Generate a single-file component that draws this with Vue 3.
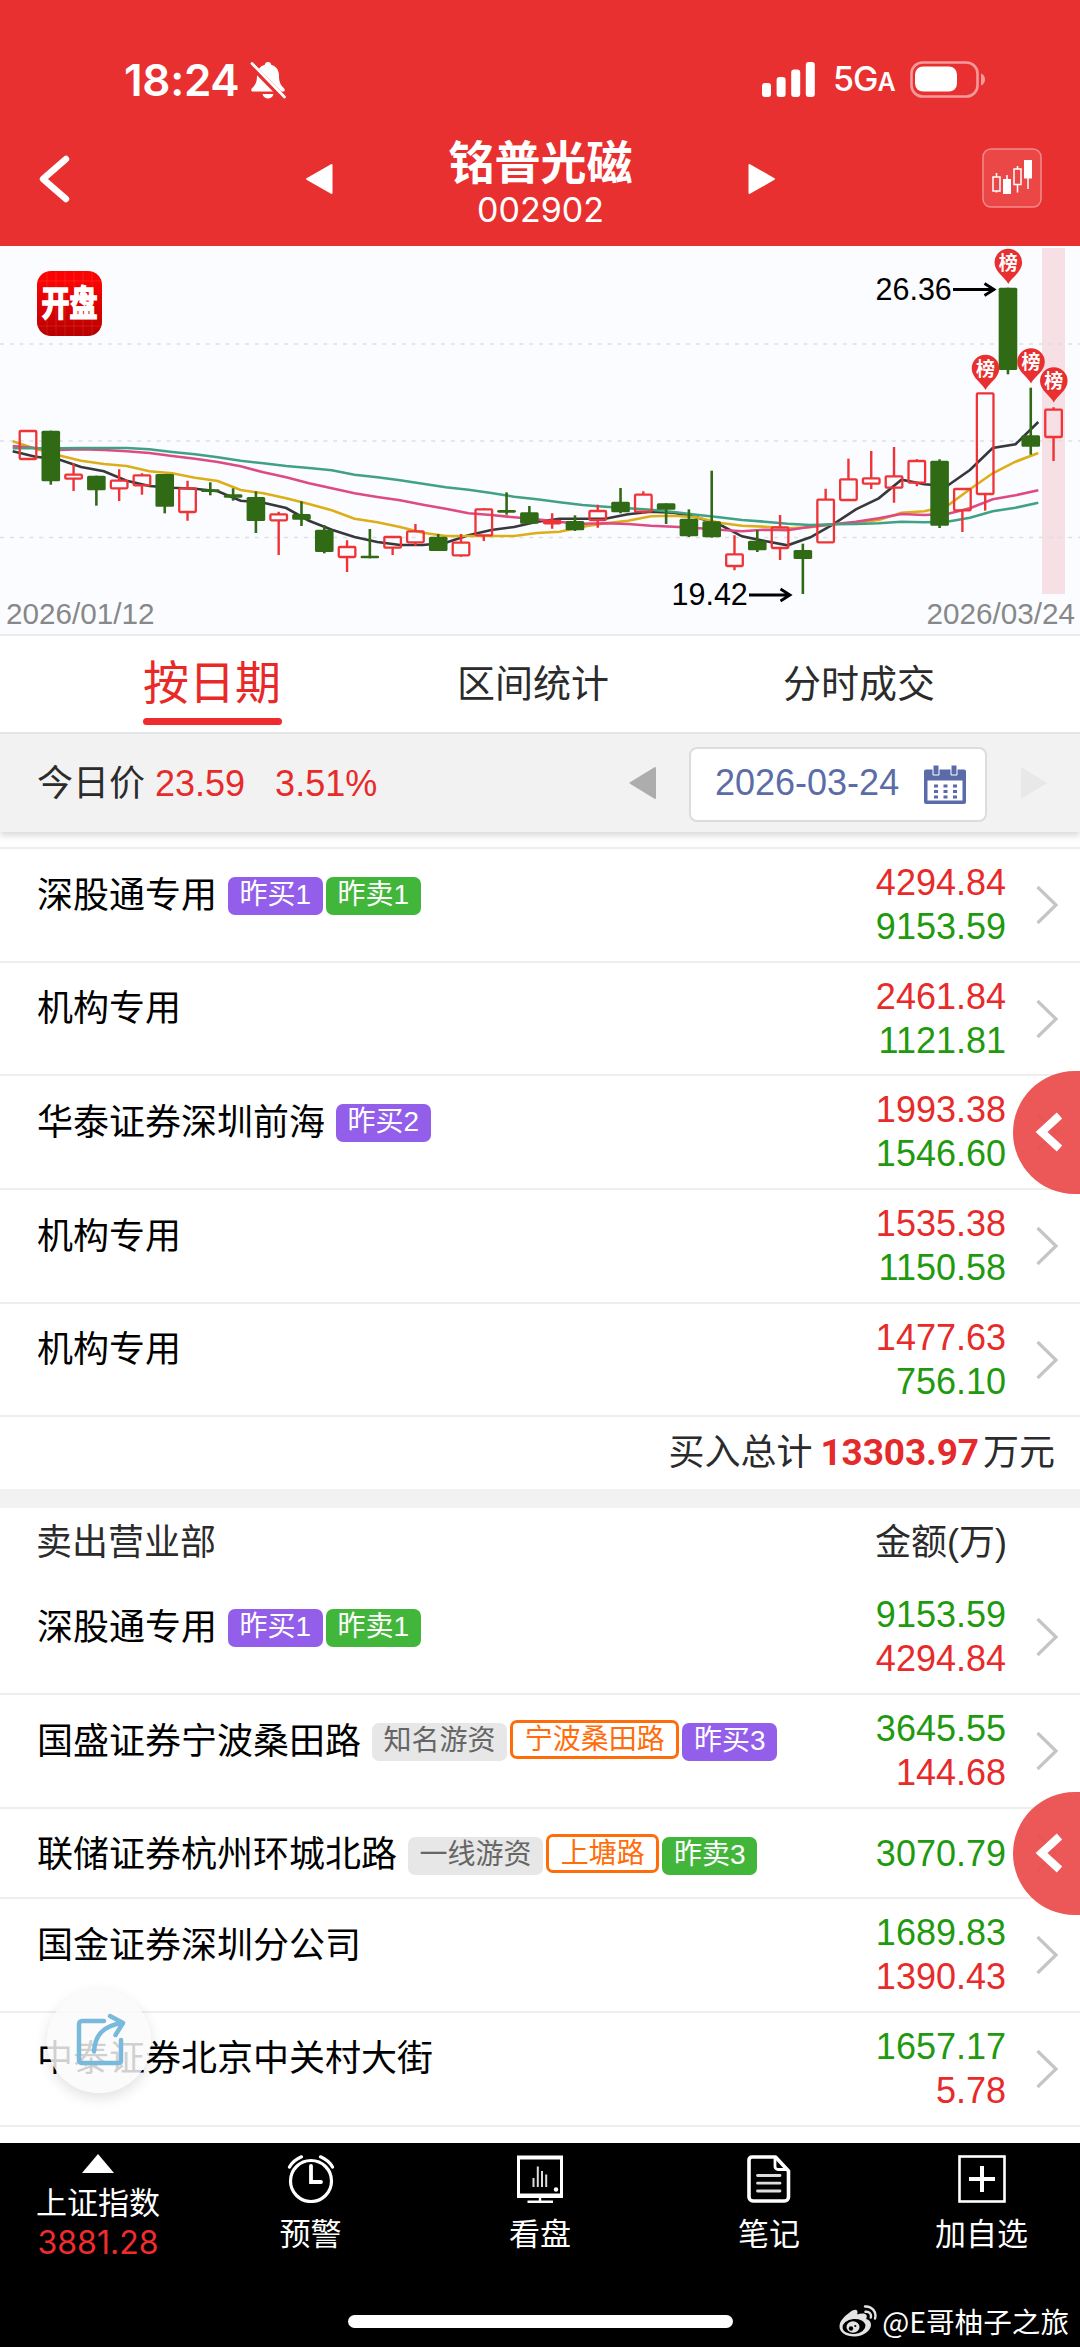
<script setup>
const STEP = 22.79
const yPos = (v) => v / 3 - 6

// direction, high, body top, body bottom, low
const rawCandles = [
  ['r', 573, 573, 657, 657], ['g', 572, 572, 724, 734], ['r', 669, 704, 716, 753], ['g', 707, 707, 751, 797],
  ['r', 688, 722, 745, 783], ['r', 700, 706, 736, 764], ['g', 702, 702, 800, 820], ['r', 722, 745, 816, 842],
  ['g', 727, 748, 756, 766], ['g', 745, 763, 773, 782], ['g', 754, 771, 843, 879], ['r', 815, 823, 841, 945],
  ['g', 784, 822, 839, 858], ['g', 855, 869, 936, 940], ['r', 901, 921, 951, 996], ['g', 867, 947, 955, 955],
  ['r', 891, 891, 923, 945], ['r', 852, 874, 907, 917], ['g', 882, 890, 933, 933], ['r', 882, 908, 946, 950],
  ['r', 805, 808, 886, 903], ['g', 757, 810, 818, 824], ['g', 798, 817, 851, 851], ['r', 820, 843, 850, 866],
  ['g', 826, 843, 871, 873], ['r', 794, 813, 840, 863], ['g', 744, 785, 817, 820], ['r', 754, 764, 815, 822],
  ['g', 790, 790, 809, 852], ['g', 808, 836, 889, 891], ['g', 692, 844, 892, 893], ['r', 886, 943, 978, 991],
  ['g', 870, 902, 931, 936], ['r', 825, 862, 924, 960], ['g', 911, 930, 957, 1062], ['r', 746, 779, 907, 909],
  ['r', 656, 718, 780, 780], ['r', 633, 715, 731, 747], ['r', 621, 709, 743, 788], ['r', 658, 663, 728, 739],
  ['g', 658, 662, 857, 864], ['r', 747, 747, 811, 876], ['r', 460, 460, 762, 812], ['g', 143, 143, 390, 403],
  ['g', 443, 586, 620, 644], ['r', 502, 509, 591, 663],
]
const candles = rawCandles.map(([dir, high, top, bottom, low], i) => ({
  dir,
  x: 28 + i * STEP,
  high: yPos(high),
  top: yPos(top),
  bottom: yPos(bottom),
  low: yPos(low),
}))

const averages = [
  { color: '#38383c', values: [634, 650, 658, 681, 694, 722, 738, 743, 746, 754, 782, 788, 804, 842, 869, 891, 906, 915, 915, 908, 886, 870, 861, 845, 836, 836, 836, 823, 815, 818, 832, 853, 889, 903, 916, 892, 853, 808, 775, 719, 733, 738, 690, 624, 613, 546] },
  { color: '#dcae17', values: [604, 626, 646, 662, 672, 678, 694, 700, 713, 723, 750, 760, 775, 792, 811, 836, 847, 861, 878, 888, 888, 888, 888, 879, 875, 860, 850, 842, 829, 827, 832, 848, 857, 860, 865, 862, 853, 848, 840, 818, 814, 798, 748, 700, 665, 639] },
  { color: '#dd4a84', values: [618, 624, 630, 628, 630, 634, 639, 648, 656, 666, 679, 697, 712, 730, 745, 760, 771, 781, 794, 806, 820, 825, 832, 838, 846, 851, 850, 852, 857, 860, 864, 869, 874, 869, 871, 860, 853, 845, 835, 822, 825, 822, 805, 778, 766, 751] },
  { color: '#40a184', values: [625, 625, 625, 624, 624, 624, 628, 636, 643, 652, 662, 670, 678, 684, 691, 704, 712, 721, 731, 742, 749, 759, 770, 778, 787, 795, 800, 805, 809, 816, 824, 832, 840, 845, 851, 855, 853, 852, 850, 845, 847, 845, 833, 814, 803, 788] },
].map((a) => ({
  color: a.color,
  points: a.values.map((v, i) => `${(12.7 + i * STEP).toFixed(1)},${yPos(v).toFixed(1)}`).join(' '),
}))

const pins = [
  { x: 985.5, y: 122.5 },
  { x: 1008.3, y: 16.5 },
  { x: 1031, y: 116 },
  { x: 1053.8, y: 135 },
]

const buyers = [
  { name: '深股通专用', tags: [['buy', '昨买1'], ['sell', '昨卖1']], amounts: ['4294.84', '9153.59'] },
  { name: '机构专用', tags: [], amounts: ['2461.84', '1121.81'] },
  { name: '华泰证券深圳前海', tags: [['buy', '昨买2']], amounts: ['1993.38', '1546.60'], handle: true },
  { name: '机构专用', tags: [], amounts: ['1535.38', '1150.58'] },
  { name: '机构专用', tags: [], amounts: ['1477.63', '756.10'] },
]
const sellers = [
  { name: '深股通专用', tags: [['buy', '昨买1'], ['sell', '昨卖1']], amounts: ['9153.59', '4294.84'] },
  { name: '国盛证券宁波桑田路', tags: [['kind', '知名游资'], ['alias', '宁波桑田路'], ['buy', '昨买3']], amounts: ['3645.55', '144.68'] },
  { name: '联储证券杭州环城北路', tags: [['kind', '一线游资'], ['alias', '上塘路'], ['sell', '昨卖3']], amounts: ['3070.79'], handle: true },
  { name: '国金证券深圳分公司', tags: [], amounts: ['1689.83', '1390.43'] },
  { name: '中泰证券北京中关村大街', tags: [], amounts: ['1657.17', '5.78'], share: true },
]
const sections = [
  { side: 'buying', rows: buyers },
  { side: 'selling', rows: sellers },
]
</script>

<template>
  <div class="screen">
    <header class="top">
      <div class="status">
        <div class="status-left">
          <span class="time">18:24</span>
          <svg class="bell" width="36" height="38" viewBox="0 0 36 38">
            <path d="M18 1c-2 0-3 1.300-3.200 2.800C9.600 5.300 7 9.500 7 14.500c0 7-1.500 9-5 12.700C.7 28.600 1.200 30.500 3 30.500h30c1.800 0 2.300-1.900 1-3.300-3.500-3.700-5-5.700-5-12.700 0-5-2.600-9.200-7.800-10.700C21 2.300 20 1 18 1z" fill="#fff" />
            <path d="M12.500 33h11c-.7 2.800-2.800 4.500-5.500 4.500S13.200 35.800 12.500 33z" fill="#fff" />
            <path d="M.5 3.500 33.500 37" stroke="#e93030" stroke-width="6" />
            <path d="M2 2.500 34.500 36" stroke="#fff" stroke-width="2.800" stroke-linecap="round" />
          </svg>
        </div>
        <div class="status-right">
          <svg width="53" height="35" viewBox="0 0 53 35" fill="#fff">
            <rect x="0" y="21" width="9" height="14" rx="3" />
            <rect x="14.600" y="15" width="9" height="20" rx="3" />
            <rect x="29.200" y="7.500" width="9" height="27.500" rx="3" />
            <rect x="43.800" y="0" width="9" height="35" rx="3" />
          </svg>
          <span class="net">5G<small>A</small></span>
          <svg width="76" height="37" viewBox="0 0 76 37">
            <rect x="1.500" y="1.500" width="66" height="34" rx="11" fill="none" stroke="#f59a9a" stroke-width="2.600" />
            <rect x="5" y="5.500" width="42" height="25" rx="8" fill="#fff" />
            <path d="M71 12.500c2.600 1 4 3.200 4 6s-1.400 5-4 6z" fill="#f59a9a" />
          </svg>
        </div>
      </div>
      <nav class="navbar">
        <svg class="back" width="32" height="48" viewBox="0 0 32 48"><path d="M28 4 5 24 28 44" fill="none" stroke="#fff" stroke-width="6.400" stroke-linecap="round" stroke-linejoin="round" /></svg>
        <svg class="prev" width="28" height="32" viewBox="0 0 28 32"><path d="M26.500 2v28L2 16z" fill="#fff" stroke="#fff" stroke-width="2" stroke-linejoin="round" /></svg>
        <div class="title">
          <h1>铭普光磁</h1>
          <p>002902</p>
        </div>
        <svg class="next" width="28" height="32" viewBox="0 0 28 32"><path d="M1.500 2v28L26 16z" fill="#fff" stroke="#fff" stroke-width="2" stroke-linejoin="round" /></svg>
        <svg class="kline" width="60" height="60" viewBox="0 0 60 60">
          <rect x="1" y="1" width="58" height="58" rx="8" fill="#eb4747" stroke="#f28a8a" stroke-width="1.500" />
          <path d="M14.500 25v4M14.500 43v1.500M25 27v4M35.500 18v3M35.500 36.500v8M46 30v11" stroke="#fff" stroke-width="1.500" />
          <rect x="11" y="29" width="7" height="14" fill="none" stroke="#fff" stroke-width="1.500" />
          <rect x="21" y="31" width="8" height="15" fill="#fff" />
          <rect x="32" y="21" width="7" height="15.500" fill="none" stroke="#fff" stroke-width="1.500" />
          <rect x="42" y="12" width="8" height="18.500" fill="#fff" />
        </svg>
      </nav>
    </header>

    <section class="chart">
      <svg width="1080" height="389" viewBox="0 0 1080 389">
        <defs>
          <linearGradient id="logo" x1="0" y1="0" x2="0" y2="1">
            <stop offset="0.150" stop-color="#fb0303" />
            <stop offset="1" stop-color="#b80000" />
          </linearGradient>
        </defs>
        <rect x="1042" y="2" width="23" height="346" fill="#f6dfe5" />
        <g stroke="#dcdfe4" stroke-width="1.600" stroke-dasharray="4 5.800">
          <path d="M0 98H1080M0 195H1080M0 291.500H1080" />
        </g>
        <rect x="37" y="25" width="65" height="65" rx="14" fill="url(#logo)" />
        <path d="M47 25v65M56 25v65M65 25v65M74 25v65M83 25v65M92 25v65M37 35h65M37 80h65" stroke="#fff" stroke-opacity=".1" />
        <text class="logo-text" transform="translate(69.500 70) scale(0.800 1)" text-anchor="middle">开盘</text>

        <polyline v-for="a in averages" :key="a.color" :points="a.points" :stroke="a.color" fill="none" stroke-width="2.600" />

        <g v-for="c in candles" :key="c.x">
          <template v-if="c.dir === 'g'">
            <path :d="`M${c.x} ${c.high}V${c.low}`" stroke="#316a14" stroke-width="2.600" />
            <rect :x="c.x - 9.3" :y="c.top" width="18.600" :height="c.bottom - c.top" rx="1.500" fill="#316a14" />
          </template>
          <template v-else>
            <path :d="`M${c.x} ${c.high}V${c.top}M${c.x} ${c.bottom}V${c.low}`" stroke="#ee3437" stroke-width="2.400" />
            <rect :x="c.x - 8.300" :y="c.top" width="16.600" :height="c.bottom - c.top" rx="1" fill="none" stroke="#ee3437" stroke-width="2.300" />
          </template>
        </g>

        <g v-for="p in pins" :key="p.x" :transform="`translate(${p.x} ${p.y})`">
          <path d="M0 21.500C-2.500 15.500-13.800 9.500-13.800 0a13.800 13.800 0 1 1 27.600 0C13.800 9.500 2.500 15.500 0 21.500z" fill="#e83030" />
          <text class="pin-text" x="0" y="7.200" text-anchor="middle">榜</text>
        </g>

        <text class="mark" x="875.500" y="53.500">26.36</text>
        <path d="M953 43.500h40M984.500 37.500l9.500 6-9.500 6" class="arrow" />
        <text class="mark" x="671.500" y="358.500">19.42</text>
        <path d="M749 349h40M780.500 343l9.500 6-9.500 6" class="arrow" />
        <text class="day" x="6" y="377.500">2026/01/12</text>
        <text class="day" x="1075" y="377.500" text-anchor="end">2026/03/24</text>
      </svg>
    </section>

    <div class="tabs">
      <span class="tab active">按日期</span>
      <span class="tab">区间统计</span>
      <span class="tab">分时成交</span>
    </div>

    <div class="datebar">
      <div class="quote">今日价 <b>23.59</b><b class="pct">3.51%</b></div>
      <div class="picker">
        <svg width="28" height="34" viewBox="0 0 28 34"><path d="M26 2v30L1.500 17z" fill="#adadad" stroke="#adadad" stroke-width="2" stroke-linejoin="round" /></svg>
        <div class="datebox">
          <span>2026-03-24</span>
          <svg width="42" height="39" viewBox="0 0 42 39">
            <path d="M2 4.500h38a2 2 0 0 1 2 2V37a2 2 0 0 1-2 2H2a2 2 0 0 1-2-2V6.500a2 2 0 0 1 2-2z" fill="#5b6aa8" />
            <path d="M3.500 15.500h35v20h-35z" fill="#fff" />
            <path d="M9 0h6v10H9zM27 0h6v10h-6z" fill="#5b6aa8" stroke="#fff" stroke-width="1" />
            <path d="M10 21h23M10 26.500h23M10 32h23" stroke="#5b6aa8" stroke-width="3" stroke-dasharray="4 5.500" />
          </svg>
        </div>
        <svg width="28" height="34" viewBox="0 0 28 34"><path d="M1.500 2v30L26.500 17z" fill="#e8e8e8" stroke="#e8e8e8" stroke-width="1" stroke-linejoin="round" /></svg>
      </div>
    </div>

    <main>
      <section v-for="s in sections" :key="s.side" :class="s.side">
        <div v-if="s.side === 'selling'" class="head"><span>卖出营业部</span><span>金额(万)</span></div>
        <div v-for="(row, i) in s.rows" :key="i" class="row" :class="{ single: row.amounts.length === 1 }">
          <div class="seat">
            <span class="name">{{ row.name }}</span>
            <span v-for="t in row.tags" :key="t[1]" class="tag" :class="t[0]">{{ t[1] }}</span>
          </div>
          <div class="amounts"><span v-for="a in row.amounts" :key="a">{{ a }}</span></div>
          <svg class="go" width="24" height="40" viewBox="0 0 24 40"><path d="M2.500 2 21 20 2.500 38" fill="none" stroke="#c5c5c5" stroke-width="3.200" /></svg>
          <div v-if="row.handle" class="handle">
            <svg width="28" height="42" viewBox="0 0 28 42"><path d="M24.500 4.500 6.500 21l18 16.500" fill="none" stroke="#fff" stroke-width="8" /></svg>
          </div>
          <div v-if="row.share" class="share">
            <svg width="50" height="54" viewBox="0 0 50 54" fill="none" stroke="#79b9dc" stroke-width="4.500" stroke-linecap="round" stroke-linejoin="round">
              <path d="M28 8H6a3 3 0 0 0-3 3v36a3 3 0 0 0 3 3h37a2 2 0 0 0 2-2V27" />
              <path d="M18 38.500C19 22 27 13 46 10M34 3l13 7-7.500 12" />
            </svg>
          </div>
        </div>
        <div v-if="s.side === 'buying'" class="total">买入总计<b>13303.97</b>万元</div>
      </section>
    </main>

    <footer class="bottom">
      <div class="items">
        <div class="item index">
          <svg width="32" height="19" viewBox="0 0 32 19"><path d="M16 0 32 19H0z" fill="#fff" /></svg>
          <span>上证指数</span>
          <em>3881.28</em>
        </div>
        <div class="item">
          <svg width="48" height="48" viewBox="0 0 48 48" fill="none" stroke="#fff" stroke-width="3.200" stroke-linecap="round">
            <circle cx="24" cy="26" r="20.500" />
            <path d="M2.500 12Q6 5.500 14.500 1.800M45.500 12Q42 5.500 33.500 1.800" />
            <path d="M24 11v16h10" stroke-width="3.800" />
          </svg>
          <span>预警</span>
        </div>
        <div class="item">
          <svg width="48" height="48" viewBox="0 0 48 48" fill="none" stroke="#fff" stroke-width="3.400">
            <path d="M1 .5h46v42.500H1zM4 4.500v34h40V4.500z" fill="#fff" fill-rule="evenodd" stroke="none" />
            <path d="M24 42v5M11.500 46.800h25.500" stroke-width="2.400" />
            <path d="M17.500 23v9M21.800 11.500v20.500M26 16v16M30.200 19.500v12.500" stroke="#ddd" stroke-width="2" />
            <circle cx="40" cy="34.500" r="2.200" fill="#fff" stroke="none" />
          </svg>
          <span>看盘</span>
        </div>
        <div class="item">
          <svg width="48" height="48" viewBox="0 0 48 48" fill="none" stroke="#fff" stroke-width="3.600" stroke-linejoin="round">
            <path d="M7 2h23.500L43.500 16v26a4 4 0 0 1-4 4H8a4 4 0 0 1-4-4V5a3 3 0 0 1 3-3z" />
            <path d="M30 3v8.500a3 3 0 0 0 3 3h10" stroke-width="2.800" />
            <path d="M12.500 20.500h22.500M12.500 28.200h22.500M12.500 36h22.500" stroke="#ddd" stroke-width="2.800" stroke-linecap="round" />
          </svg>
          <span>笔记</span>
        </div>
        <div class="item">
          <svg width="48" height="48" viewBox="0 0 48 48" fill="none" stroke="#fff">
            <rect x="1.500" y="1.500" width="45" height="45" stroke-width="2.600" />
            <path d="M24 11v26M11 24h26" stroke-width="4" />
          </svg>
          <span>加自选</span>
        </div>
      </div>
      <div class="home"></div>
      <div class="watermark">
        <svg width="38" height="32" viewBox="0 0 38 32">
          <path d="M10 8c3.500-3 7-4 8-2.500.8 1.200.6 2.500 0 4 4-1.500 8.500-1.600 9.500.6.6 1.300.2 2.600-.4 3.900 3 .8 4.900 2.800 4.900 5.800 0 6-7.500 11.700-16.500 11.700C7 31.500.5 27.500.5 21.500.5 16.500 4.500 12 10 8z" fill="#e4e4e4" />
          <ellipse cx="15" cy="21.500" rx="11.500" ry="7.500" fill="#000" transform="rotate(-6 15 21.500)" />
          <ellipse cx="14" cy="22" rx="6.500" ry="5.800" fill="#e4e4e4" />
          <circle cx="12" cy="23.500" r="2.200" fill="#000" />
          <circle cx="16.300" cy="21" r="1.100" fill="#000" />
          <path d="M26 1.500C33 1 38 7 36 13.500M26.500 6.800c4-.5 6.200 2.400 5.300 5.700" fill="none" stroke="#e4e4e4" stroke-width="2.400" stroke-linecap="round" />
        </svg>
        <span>@E哥柚子之旅</span>
      </div>
    </footer>
  </div>
</template>

<style>
body {
  margin: 0;
}
</style>

<style scoped>
.screen {
  display: flex;
  flex-direction: column;
  width: 1080px;
  height: 2347px;
  overflow: hidden;
  background: #fff;
  font-family: "Liberation Sans", "Noto Sans CJK SC", sans-serif;
  color: #2b2b2b;
}
svg {
  display: block;
  flex: none;
}
.top {
  height: 246px;
  background: #e93030;
  color: #fff;
}
.status {
  display: flex;
  justify-content: space-between;
  align-items: center;
  height: 98px;
  padding: 61px 94px 0 124px;
  box-sizing: border-box;
}
.status-left,
.status-right {
  display: flex;
  align-items: center;
}
.time {
  width: 126px;
  font: 600 44px/36px Inter, sans-serif;
  letter-spacing: -0.300px;
}
.net {
  margin: 2px 18px 0 18px;
  width: 59px;
  font: 500 34px/36px Inter, sans-serif;
  letter-spacing: -1px;
}
.net small {
  font-size: 25px;
  font-weight: 600;
}
.navbar {
  display: flex;
  align-items: flex-start;
  height: 148px;
}
.back {
  margin: 57px 0 0 38px;
}
.prev {
  margin: 65px 0 0 235px;
}
.title {
  width: 415px;
  text-align: center;
}
.title h1 {
  margin: 31px 0 0;
  font: 700 46px/60px "Noto Sans CJK SC", sans-serif;
}
.title p {
  margin: 4px 0 0;
  font: 400 34px/34px Inter, sans-serif;
}
.next {
  margin: 65px 206px 0 0;
}
.kline {
  margin-top: 50px;
}
.chart {
  height: 390px;
  background: #fbfcff;
  border-bottom: 2px solid #ebebee;
  box-sizing: border-box;
}
.logo-text {
  font: 700 35px "Noto Sans CJK SC", sans-serif;
  fill: #fff;
  stroke: #fff;
  stroke-width: 1.600;
}
.pin-text {
  font: 700 19px "Noto Sans CJK SC", sans-serif;
  fill: #fff;
}
.mark {
  font-size: 30.500px;
  fill: #000;
}
.day {
  font-size: 29.700px;
  fill: #888;
}
.arrow {
  fill: none;
  stroke: #000;
  stroke-width: 2.800;
}
.tabs {
  display: flex;
  height: 98px;
  padding-left: 143px;
  border-bottom: 2px solid #e6e6e6;
  box-sizing: border-box;
}
.tab {
  flex: none;
  margin: 30px 174px 0 0;
  font-size: 38px;
  line-height: 36px;
  white-space: nowrap;
}
.tab.active {
  position: relative;
  height: 66px;
  margin: 23px 175px 0 0;
  padding-right: 1px;
  font-size: 46px;
  line-height: 48px;
  color: #e92828;
}
.tab.active::after {
  content: "";
  position: absolute;
  left: 0;
  right: 0;
  bottom: 0;
  height: 7px;
  border-radius: 4px;
  background: #ee2c2e;
}
.datebar {
  display: flex;
  justify-content: space-between;
  align-items: center;
  height: 98px;
  padding: 0 32px 0 37px;
  box-sizing: border-box;
  background: #f2f2f2;
  box-shadow: 0 4px 6px rgba(0, 0, 0, 0.14);
}
.quote {
  margin-top: -6px;
  font-size: 36px;
}
.quote b {
  font-weight: 400;
  color: #e72a2a;
}
.quote .pct {
  margin-left: 30px;
}
.picker {
  display: flex;
  align-items: center;
}
.datebox {
  display: flex;
  align-items: center;
  justify-content: space-between;
  width: 298px;
  height: 75px;
  margin: 2px 33px 0 32px;
  padding: 0 19px 0 24px;
  border: 2px solid #dcdcdc;
  border-radius: 8px;
  background: #fff;
  box-sizing: border-box;
  font-size: 36px;
  line-height: 38px;
  color: #5b6ca6;
}
.datebox span {
  margin-top: -2px;
}
.buying {
  margin-top: 15px;
  border-top: 2px solid #eee;
  border-bottom: 19px solid #f2f2f2;
}
.row {
  position: relative;
  display: flex;
  align-items: flex-start;
  height: 113.700px;
  padding: 0 21px 0 37px;
  border-bottom: 2px solid #eee;
  box-sizing: border-box;
}
.row.single {
  height: 90.400px;
}
.seat {
  display: flex;
  align-items: center;
  flex: 1;
  height: 92px;
}
.name {
  margin: -7px 8px 0 0;
  font-size: 36px;
  color: #000;
}
.tag {
  height: 38px;
  margin: 2px 0 0 3px;
  padding: 0 11.600px;
  border-radius: 7px;
  font-size: 28px;
  line-height: 36px;
  color: #fff;
}
.buy {
  background: #935ee9;
}
.sell {
  background: #42b63a;
}
.kind {
  background: #e7e7e7;
  color: #666;
}
.alias {
  height: 33px;
  margin-top: -3px;
  border: 3px solid #ff6d0a;
  line-height: 34px;
  color: #ff6d0a;
}
.amounts {
  display: flex;
  flex-direction: column;
  align-items: flex-end;
  padding-top: 12px;
  font-size: 36px;
  line-height: 44px;
}
.row.single .amounts {
  padding-top: 23px;
}
.buying .amounts {
  color: #e72a2a;
}
.selling .amounts {
  color: #1f9a10;
}
.buying .amounts span + span {
  color: #1f9a10;
}
.selling .amounts span + span {
  color: #e72a2a;
}
.go {
  align-self: center;
  margin-left: 29px;
}
.handle {
  position: absolute;
  top: -5px;
  right: 0;
  width: 67px;
  height: 123px;
  padding: 40px 0 0 22px;
  border-radius: 62px 0 0 62px;
  background: rgba(235, 77, 77, 0.940);
  box-sizing: border-box;
}
.row.single .handle {
  top: -17px;
}
.share {
  position: absolute;
  left: 47px;
  top: -24px;
  width: 104px;
  height: 104px;
  padding: 24px 0 0 29px;
  border-radius: 50%;
  background: rgba(250, 250, 250, 0.830);
  box-shadow: 0 5px 14px rgba(0, 0, 0, 0.120);
  box-sizing: border-box;
}
.total {
  height: 72px;
  padding-right: 25px;
  text-align: right;
  font-size: 36px;
  line-height: 72px;
}
.total b {
  margin: 0 4px 0 8px;
  font: 700 37px/60px Roboto, sans-serif;
  letter-spacing: -0.100px;
  color: #e42a2a;
}
.head {
  display: flex;
  justify-content: space-between;
  height: 73px;
  padding: 0 73px 0 36px;
  font-size: 36px;
  line-height: 69px;
  box-sizing: border-box;
}
.bottom {
  position: relative;
  flex: none;
  height: 204px;
  margin-top: auto;
  background: #000;
  color: #fff;
}
.items {
  display: grid;
  grid-template-columns: 196px 229px 230px 228px 197px;
}
.item {
  display: flex;
  flex-direction: column;
  align-items: center;
  padding-top: 12px;
  font-size: 31px;
}
.item span {
  margin-top: 14px;
  line-height: 36px;
}
.index svg {
  margin-top: -1px;
}
.index span {
  margin-top: 13px;
}
.index em {
  margin-top: 3px;
  font: 400 32px/36px Inter, sans-serif;
  color: #f02c2e;
}
.home {
  position: absolute;
  left: 348px;
  top: 172px;
  width: 385px;
  height: 13px;
  border-radius: 7px;
  background: #fff;
}
.watermark {
  position: absolute;
  right: 11px;
  bottom: 8px;
  display: flex;
  align-items: center;
  gap: 5px;
  font: 400 28.600px/36px "Noto Sans CJK SC", sans-serif;
}
</style>
